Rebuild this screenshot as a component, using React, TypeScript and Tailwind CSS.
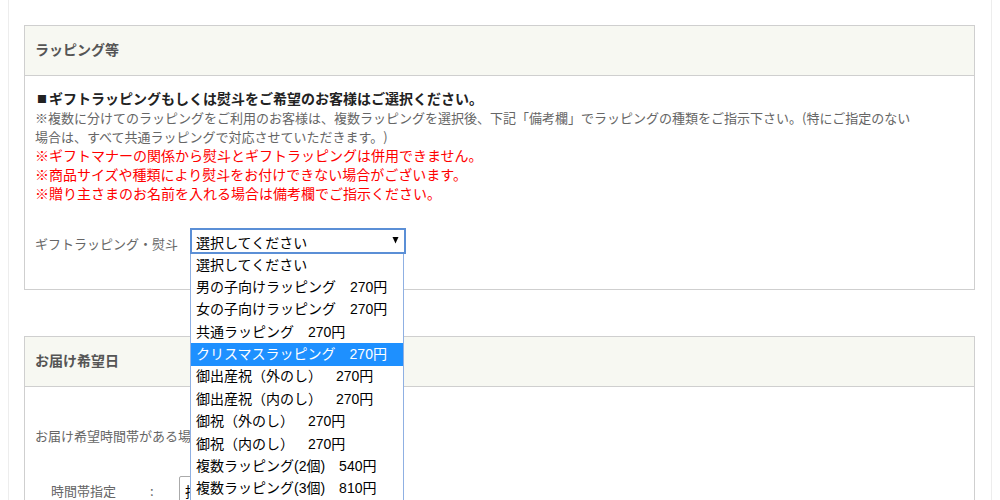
import React, { useState } from 'react';

interface WrappingOption {
  value: string;
  label: string;
}

const wrappingOptions: WrappingOption[] = [
  { value: 'none', label: '選択してください' },
  { value: 'boy', label: '男の子向けラッピング　270円' },
  { value: 'girl', label: '女の子向けラッピング　270円' },
  { value: 'common', label: '共通ラッピング　270円' },
  { value: 'christmas', label: 'クリスマスラッピング　270円' },
  { value: 'birth-outer', label: '御出産祝（外のし）　270円' },
  { value: 'birth-inner', label: '御出産祝（内のし）　270円' },
  { value: 'gift-outer', label: '御祝（外のし）　270円' },
  { value: 'gift-inner', label: '御祝（内のし）　270円' },
  { value: 'multi-2', label: '複数ラッピング(2個)　540円' },
  { value: 'multi-3', label: '複数ラッピング(3個)　810円' }
];

const notices: string[] = [
  '※ギフトマナーの関係から熨斗とギフトラッピングは併用できません。',
  '※商品サイズや種類により熨斗をお付けできない場合がございます。',
  '※贈り主さまのお名前を入れる場合は備考欄でご指示ください。'
];

interface PanelProps {
  title: string;
  children: React.ReactNode;
}

const Panel: React.FC<PanelProps> = ({ title, children }) => (
  <section className="border border-[#cfcfcf]">
    <h2 className="border-b border-[#cfcfcf] bg-[#f7f8f2] px-[10px] pt-[13px] pb-[15px] text-[14px] leading-[21px] font-bold text-[#555]">
      {title}
    </h2>
    {children}
  </section>
);

const App: React.FC = () => {
  const [selected, setSelected] = useState('none');
  const [highlighted, setHighlighted] = useState('christmas');
  const [open, setOpen] = useState(true);

  const choose = (value: string) => {
    setSelected(value);
    setOpen(false);
  };

  return (
    <div className="h-screen overflow-hidden bg-white px-2 font-['Noto_Sans_CJK_JP',sans-serif] text-[13px] leading-[19px] text-[#666] [text-spacing-trim:space-all]">
      <main className="flex min-h-full flex-col gap-[46px] border-x border-[#ededed] pt-[25px] pr-4 pl-[15px]">
        <Panel title="ラッピング等">
          <div className="px-[10px] pt-[13px] pb-[35px]">
            <p className="flex text-[14px] font-bold text-[#222]">
              <span className="w-[14px] text-center text-[10px]">■</span>
              ギフトラッピングもしくは熨斗をご希望のお客様はご選択ください。
            </p>
            <p>
              ※複数に分けてのラッピングをご利用のお客様は、複数ラッピングを選択後、下記「備考欄」でラッピングの種類をご指示下さい。(特にご指定のない
              <br />
              場合は、すべて共通ラッピングで対応させていただきます。)
            </p>
            {notices.map((notice) => (
              <p key={notice} className="text-[14px] text-[#ff0000]">
                {notice}
              </p>
            ))}

            <div className="mt-[25px] flex items-center">
              <label htmlFor="wrapping" className="w-[155px] pt-1">
                ギフトラッピング・熨斗
              </label>
              <div className="relative w-[216px] font-['Liberation_Sans','Noto_Sans_CJK_JP',sans-serif] text-[14px] text-black">
                <select
                  id="wrapping"
                  value={selected}
                  onChange={(e) => setSelected(e.target.value)}
                  onClick={() => setOpen(!open)}
                  className="block h-[26px] w-full appearance-none border-2 border-[#5b8fd6] bg-white pt-1 pl-1 outline-none"
                >
                  {wrappingOptions.map((option) => (
                    <option key={option.value} value={option.value}>
                      {option.label}
                    </option>
                  ))}
                </select>
                <svg
                  viewBox="0 0 7 7"
                  className="pointer-events-none absolute top-[9px] right-[7px] size-[7px]"
                  aria-hidden="true"
                >
                  <path d="M0.5 0h6L3.5 6.5z" fill="#000" />
                </svg>

                {open && (
                  <ul
                    role="listbox"
                    aria-label="ギフトラッピング・熨斗"
                    className="absolute top-full left-0 z-10 grid h-[246px] w-[214px] auto-rows-fr border-x border-[#8fb0e3] bg-white"
                  >
                    {wrappingOptions.map((option) => (
                      <li
                        key={option.value}
                        role="option"
                        aria-selected={highlighted === option.value}
                        onMouseEnter={() => setHighlighted(option.value)}
                        onClick={() => choose(option.value)}
                        className={`flex items-center pl-[5px] whitespace-nowrap ${
                          highlighted === option.value ? 'bg-[#1e90ff] text-white' : ''
                        }`}
                      >
                        {option.label}
                      </li>
                    ))}
                  </ul>
                )}
              </div>
            </div>
          </div>
        </Panel>

        <Panel title="お届け希望日">
          <div className="px-[10px] pt-[39px] pb-10">
            <p>お届け希望時間帯がある場</p>
            <div className="mt-[31px] flex items-start pl-4">
              <label htmlFor="delivery-time" className="flex w-[128px] gap-[34px] pt-[5px]">
                <span>時間帯指定</span>
                <span>:</span>
              </label>
              <select
                id="delivery-time"
                className="h-[26px] w-[140px] appearance-none rounded-xs border border-[#aaa] bg-white pt-1 pl-[5px] text-[14px] text-black"
              >
                <option>指定なし</option>
              </select>
            </div>
          </div>
        </Panel>
      </main>
    </div>
  );
};

export default App;
